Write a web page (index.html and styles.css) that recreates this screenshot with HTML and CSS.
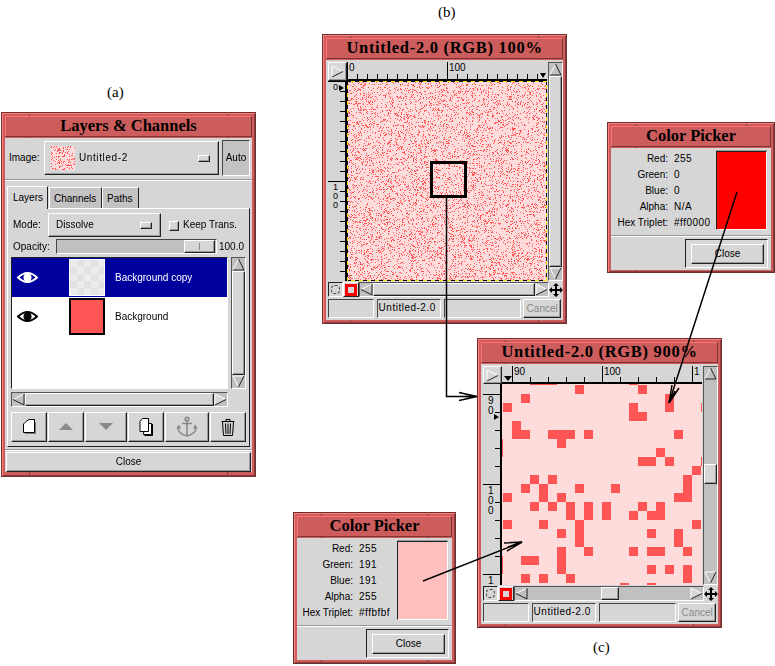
FILE: index.html
```html
<!DOCTYPE html>
<html lang="en">
<head>
  <meta charset="UTF-8">
  <meta name="viewport" content="width=device-width, initial-scale=1.0">
  <title>Color Picker figure</title>
  <link rel="stylesheet" href="styles.css">
</head>
<body>
  <svg class="defs" width="0" height="0">
    <symbol id="arr-r" viewBox="0 0 13 13"><path d="M1 12V1L12 6.5" fill="#d6d6d6" stroke="#fff"/><path d="M12 6.5L1 12" fill="none" stroke="#222"/></symbol>
    <symbol id="arr-l" viewBox="0 0 13 13"><path d="M12 1L1 6.5" fill="none" stroke="#fff"/><path d="M1 6.5L12 12V1" fill="none" stroke="#222"/></symbol>
    <symbol id="arr-u" viewBox="0 0 13 13"><path d="M1 12L6.5 1" fill="none" stroke="#fff"/><path d="M6.5 1L12 12H1" fill="none" stroke="#222"/></symbol>
    <symbol id="arr-d" viewBox="0 0 13 13"><path d="M12 1H1L6.5 12" fill="none" stroke="#fff"/><path d="M6.5 12L12 1" fill="none" stroke="#222"/></symbol>
    <symbol id="move" viewBox="0 0 14 14"><path d="M7 0l3 3H8v3h3V4l3 3-3 3V8H8v3h2l-3 3-3-3h2V8H3v2L0 7l3-3v2h3V3H4z" fill="#000"/></symbol>
    <symbol id="eye" viewBox="0 0 21 13"><path d="M1 6.5Q10.500 -2.500 20 6.500Q10.500 15.500 1 6.500Z" fill="none" stroke="currentColor" stroke-width="2"/><circle cx="10.500" cy="6.500" r="4" fill="currentColor"/></symbol>
  </svg>

  <p class="fig-label label-a">(a)</p>
  <p class="fig-label label-b">(b)</p>
  <p class="fig-label label-c">(c)</p>

  <section class="win layers">
    <h1 class="title">Layers &amp; Channels</h1>
    <div class="client">
      <div class="image-row">
        <span class="image-label">Image:</span>
        <div class="option image-option">
          <canvas id="thumb" class="thumb-noise" width="24" height="24"></canvas>
          <span>Untitled-2</span>
          <i class="indicator"></i>
        </div>
        <div class="auto">Auto</div>
      </div>
      <div class="sep"></div>
      <div class="notebook">
        <div class="tabs">
          <div class="tab active">Layers</div>
          <div class="tab tab-channels">Channels</div>
          <div class="tab tab-paths">Paths</div>
        </div>
        <div class="panel">
          <div class="mode-row">
            <span class="mode-label">Mode:</span>
            <div class="option mode-option"><span>Dissolve</span><i class="indicator"></i></div>
            <i class="check"></i>
            <span>Keep Trans.</span>
          </div>
          <div class="opacity-row">
            <span class="opacity-label">Opacity:</span>
            <div class="slider"><div class="slider-thumb"></div></div>
            <span>100.0</span>
          </div>
          <div class="list-row">
            <div class="layer-list">
              <div class="layer selected">
                <svg class="eye"><use href="#eye"/></svg>
                <div class="layer-thumb checker"></div>
                <span>Background copy</span>
              </div>
              <div class="layer">
                <svg class="eye"><use href="#eye"/></svg>
                <div class="layer-thumb solid"></div>
                <span>Background</span>
              </div>
            </div>
            <div class="scroll v">
              <svg class="arrow"><use href="#arr-u"/></svg>
              <div class="thumb fill"></div>
              <svg class="arrow"><use href="#arr-d"/></svg>
            </div>
          </div>
          <div class="scroll h list-h">
            <svg class="arrow"><use href="#arr-l"/></svg>
            <div class="thumb fill"></div>
            <svg class="arrow"><use href="#arr-r"/></svg>
          </div>
          <div class="tool-row">
            <button class="tool w36">
              <svg width="14" height="16" viewBox="0 0 14 16"><path d="M4 2.500L7 .5H12.500V13.500H1.500V5Z" fill="#fff" stroke="#000"/><path d="M13 3V14H3V15H14V3Z" fill="#777"/></svg>
            </button>
            <button class="tool w36">
              <svg width="14" height="8" viewBox="0 0 14 8"><path d="M7 0L14 7H0Z" fill="#8a8a8a"/></svg>
            </button>
            <button class="tool w42">
              <svg width="14" height="8" viewBox="0 0 14 8"><path d="M7 7L14 0H0Z" fill="#8a8a8a"/></svg>
            </button>
            <button class="tool w36">
              <svg width="15" height="18" viewBox="0 0 15 18"><path d="M5.500 5.500H12.500V16.500H4.500Z" fill="#fff" stroke="#000"/><path d="M13.500 6V17.500H5.500" fill="none" stroke="#000"/><path d="M1 3.500L3.500 .5H9.500V13.500H1Z" fill="#fff" stroke="#000"/></svg>
            </button>
            <button class="tool w44">
              <svg width="22" height="22" viewBox="0 0 22 22" fill="none" stroke="#8a8a8a" stroke-width="1.600"><circle cx="11" cy="3" r="1.800"/><path d="M11 5V20M6 7.500H16M1.500 11Q2 18 11 20Q20 18 20.500 11M1 12L3 10L4 13M21 12L19 10L18 13"/></svg>
            </button>
            <button class="tool w36">
              <svg width="14" height="18" viewBox="0 0 14 18" fill="none" stroke="#000"><path d="M.5 3.500H13.500M5 3V1.500H9V3M1.500 4L2.500 17.500H11.500L12.500 4"/><path d="M4.500 5.500L5 16M7 5.500V16M9.500 5.500L9 16"/></svg>
            </button>
          </div>
        </div>
      </div>
      <div class="sep sep-close"></div>
      <button class="btn close-wide">Close</button>
    </div>
  </section>

  <section class="win display normal">
    <h1 class="title">Untitled-2.0 (RGB) 100%</h1>
    <div class="client">
      <div class="view-grid">
        <div class="corner"><svg class="arrow"><use href="#arr-r"/></svg></div>
        <div class="ruler-h"><span>0</span><span>100</span></div>
        <div class="scroll v side">
          <svg class="arrow"><use href="#arr-u"/></svg>
          <div class="thumb fill"></div>
          <svg class="arrow"><use href="#arr-d"/></svg>
        </div>
        <div class="ruler-v"><span>0</span><span>1<br>0<br>0</span></div>
        <canvas id="noise" class="view" width="200" height="200"></canvas>
      </div>
      <div class="bar-row">
        <div class="qmask"><i></i></div>
        <div class="mask"><i></i></div>
        <div class="scroll h bar-scroll">
          <svg class="arrow"><use href="#arr-l"/></svg>
          <div class="thumb fill"></div>
          <svg class="arrow"><use href="#arr-r"/></svg>
        </div>
        <svg class="move"><use href="#move"/></svg>
      </div>
      <div class="status-row">
        <div class="status s1"></div>
        <div class="status s2">Untitled-2.0</div>
        <div class="status s3"></div>
        <button class="btn cancel">Cancel</button>
      </div>
    </div>
  </section>

  <section class="win display zoomed">
    <h1 class="title">Untitled-2.0 (RGB) 900%</h1>
    <div class="client">
      <div class="view-grid">
        <div class="corner"><svg class="arrow"><use href="#arr-r"/></svg></div>
        <div class="ruler-h"><span>90</span><span>100</span><span>1</span></div>
        <div class="scroll v side">
          <svg class="arrow"><use href="#arr-u"/></svg>
          <div class="thumb pos-v"></div>
          <svg class="arrow end"><use href="#arr-d"/></svg>
        </div>
        <div class="ruler-v"><span>9<br>0</span><span>1<br>0<br>0</span><span>1</span></div>
        <canvas id="cells" class="view" width="200" height="201"></canvas>
      </div>
      <div class="bar-row">
        <div class="qmask"><i></i></div>
        <div class="mask"><i></i></div>
        <div class="scroll h bar-scroll">
          <svg class="arrow"><use href="#arr-l"/></svg>
          <div class="thumb pos-h"></div>
          <svg class="arrow end"><use href="#arr-r"/></svg>
        </div>
        <svg class="move"><use href="#move"/></svg>
      </div>
      <div class="status-row">
        <div class="status s1"></div>
        <div class="status s2">Untitled-2.0</div>
        <div class="status s3"></div>
        <button class="btn cancel">Cancel</button>
      </div>
    </div>
  </section>

  <section class="win picker picker-red">
    <h1 class="title">Color Picker</h1>
    <div class="client">
      <div class="picker-top">
        <dl class="readout">
          <dt>Red:</dt><dd>255</dd>
          <dt>Green:</dt><dd>0</dd>
          <dt>Blue:</dt><dd>0</dd>
          <dt>Alpha:</dt><dd>N/A</dd>
          <dt>Hex Triplet:</dt><dd>#ff0000</dd>
        </dl>
        <div class="swatch"></div>
      </div>
      <div class="sep"></div>
      <div class="default-frame"><button class="btn">Close</button></div>
    </div>
  </section>

  <section class="win picker picker-pink">
    <h1 class="title">Color Picker</h1>
    <div class="client">
      <div class="picker-top">
        <dl class="readout">
          <dt>Red:</dt><dd>255</dd>
          <dt>Green:</dt><dd>191</dd>
          <dt>Blue:</dt><dd>191</dd>
          <dt>Alpha:</dt><dd>255</dd>
          <dt>Hex Triplet:</dt><dd>#ffbfbf</dd>
        </dl>
        <div class="swatch"></div>
      </div>
      <div class="sep"></div>
      <div class="default-frame"><button class="btn">Close</button></div>
    </div>
  </section>

  <svg class="callouts" width="775" height="666" viewBox="0 0 775 666" fill="none" stroke="#000" stroke-width="1.500">
    <rect x="431.500" y="162.500" width="34" height="34" stroke-width="3"/>
    <path d="M446.500 198V396.500H476"/>
    <path d="M477 396.500L459 392.500M477 396.500L459 400.500M477 396.500L465 396.500"/>
    <path d="M737 192L669 403"/>
    <path d="M669 403L672 385M669 403L679 388M669 403L675 391"/>
    <path d="M423 581L522 542"/>
    <path d="M522 542L504 543M522 542L507 551M522 542L508 547"/>
  </svg>

  <script src="script.js"></script>
</body>
</html>
```

FILE: styles.css
```css
* {
  box-sizing: border-box;
}
body {
  position: relative;
  width: 775px;
  height: 666px;
  margin: 0;
  overflow: hidden;
  background: #fff;
  color: #000;
  font: 10px/12px "Liberation Sans", sans-serif;
}
.defs {
  position: absolute;
}
.fig-label {
  position: absolute;
  margin: 0;
  font: 15px/16px "Liberation Serif", serif;
}
.label-a { left: 107px; top: 84px; }
.label-b { left: 438px; top: 4px; }
.label-c { left: 593px; top: 639px; }

.callouts {
  position: absolute;
  left: 0;
  top: 0;
  z-index: 5;
}

/* window frame */
.win {
  position: absolute;
  padding: 3px;
  border: 1px solid #6e2f2f;
  background:
    linear-gradient(#8b3d3d, #8b3d3d) 27px 0 / 1px 100% no-repeat,
    linear-gradient(#8b3d3d, #8b3d3d) calc(100% - 27px) 0 / 1px 100% no-repeat,
    #cd5c5c;
  box-shadow: inset 1px 1px #ff7f7f, inset -1px -1px #8b3d3d;
}
.title {
  height: 21px;
  margin: 0 0 1px;
  border: 1px solid;
  border-color: #ff7575 #7c3535 #7c3535 #ff7575;
  background: #cd5c5c;
  text-align: center;
  font: bold 16.500px/18px "Liberation Serif", serif;
  white-space: nowrap;
}
.display .title {
  letter-spacing: .7px;
}
.client {
  display: flow-root;
  background: #d6d6d6;
}
.layers { left: 1px; top: 112px; width: 255px; height: 365px; }
.normal { left: 322px; top: 34px; width: 245px; height: 290px; }
.zoomed { left: 477px; top: 338px; width: 245px; height: 290px; }
.picker-red { left: 607px; top: 122px; width: 168px; height: 151px; }
.picker-pink { left: 293px; top: 512px; width: 163px; height: 152px; }
.layers .client { height: 334px; }
.display .client { height: 260px; padding: 2px; }
.picker .client { height: 122px; }

/* shared widgets */
.sep {
  height: 2px;
  border-top: 1px solid #999;
  border-bottom: 1px solid #fff;
}
.btn, .tool, .option, .thumb, .indicator, .corner, .slider-thumb {
  border: 1px solid;
  border-color: #fff #222 #222 #fff;
  background: #d6d6d6;
  box-shadow: inset -1px -1px #9a9a9a;
}
.btn, .tool {
  padding: 0;
  font: inherit;
  color: inherit;
}
.option {
  display: flex;
  align-items: center;
}
.indicator {
  flex: none;
  width: 12px;
  height: 7px;
  margin-left: auto;
}
.scroll {
  display: flex;
  flex: none;
  border: 1px solid;
  border-color: #555 #fff #fff #555;
  background: #c0c0c0;
}
.scroll.v {
  flex-direction: column;
  width: 15px;
}
.scroll.h {
  height: 15px;
}
.arrow {
  flex: none;
  width: 13px;
  height: 13px;
}
.fill {
  flex: 1;
}
.end {
  margin-left: auto;
  margin-top: auto;
}

/* layers dialog */
.image-row {
  display: flex;
  align-items: center;
  height: 36px;
  margin: 2px 0 0 4px;
}
.image-label {
  width: 35px;
}
.image-option {
  width: 175px;
  height: 34px;
  padding: 0 8px 0 6px;
}
.image-option span {
  margin-left: 4px;
  letter-spacing: .6px;
}
.thumb-noise {
  display: block;
  width: 24px;
  height: 24px;
}
.auto {
  width: 28px;
  height: 36px;
  margin-left: 3px;
  border: 1px solid;
  border-color: #444 #fff #fff #444;
  background: #c3c3c3;
  text-align: center;
  line-height: 33px;
}
.image-row + .sep {
  margin-top: 3px;
}
.notebook {
  width: 243px;
  margin: 5px 0 0 2px;
}
.tabs {
  display: flex;
  align-items: flex-end;
  height: 22px;
}
.tab {
  position: relative;
  height: 21px;
  padding-left: 4px;
  border: 1px solid;
  border-color: #fff #222 transparent #fff;
  border-bottom: 0;
  background: #c3c3c3;
  line-height: 21px;
}
.tab.active {
  z-index: 1;
  width: 41px;
  height: 23px;
  margin-bottom: -1px;
  padding-left: 5px;
  margin-right: 1px;
  background: #d6d6d6;
}
.tab-channels { width: 53px; }
.tab-paths { width: 37px; }
.panel {
  height: 239px;
  padding: 4px 3px 0 3px;
  border: 1px solid;
  border-color: #fff #222 #222 #fff;
}
.mode-row, .opacity-row {
  display: flex;
  align-items: center;
  margin-left: 2px;
}
.mode-row { height: 24px; }
.mode-label { width: 35px; }
.mode-option {
  width: 113px;
  height: 24px;
  padding: 0 8px 0 7px;
}
.check {
  width: 10px;
  height: 10px;
  margin: 2px 4px 0 8px;
  border: 1px solid;
  border-color: #fff #222 #222 #fff;
  box-shadow: inset -1px -1px #9a9a9a;
}
.opacity-row {
  height: 15px;
  margin-top: 2px;
}
.opacity-label { width: 43px; }
.slider {
  display: flex;
  justify-content: flex-end;
  width: 161px;
  height: 15px;
  margin-right: 2px;
  padding-right: 1px;
  border: 1px solid;
  border-color: #444 #fff #fff #444;
  background: #c0c0c0;
}
.slider-thumb {
  width: 31px;
  background: linear-gradient(90deg, #888, #888) 50% 50% / 1px 7px no-repeat, #d6d6d6;
}
.list-row {
  display: flex;
  gap: 3px;
  height: 132px;
  margin-top: 3px;
}
.layer-list {
  width: 217px;
  border: 1px solid;
  border-color: #222 #fff #fff #222;
  background: #fff;
}
.layer {
  display: flex;
  align-items: center;
  height: 39px;
  padding-left: 5px;
}
.layer.selected {
  background: #00009f;
  color: #fff;
}
.eye {
  flex: none;
  width: 21px;
  height: 13px;
  margin-right: 31px;
}
.layer-thumb {
  flex: none;
  width: 36px;
  height: 37px;
  margin-right: 10px;
}
.checker {
  background: repeating-conic-gradient(#e2e2e2 0 25%, #ececec 0 50%) 0 0 / 14px 14px;
  border: 1px solid #fff;
}
.solid {
  border: 2px solid #000;
  background: #ff5555;
}
.list-h {
  width: 217px;
  margin-top: 3px;
}
.tool-row {
  display: flex;
  gap: 1px;
  height: 30px;
  margin-top: 5px;
}
.tool {
  display: flex;
  align-items: center;
  justify-content: center;
}
.w36 { width: 36px; }
.w42 { width: 42px; }
.w44 { width: 44px; }
.sep-close {
  margin-top: 2px;
}
.close-wide {
  display: block;
  width: 245px;
  height: 20px;
  margin: 1px 0 0 1px;
}

/* image windows */
.view-grid {
  display: grid;
  grid-template-columns: 19px 200px 16px;
  grid-template-rows: 19px 200px;
}
.zoomed .view-grid {
  grid-template-rows: 18px 201px;
}
.view-grid .side {
  grid-column: 3;
  grid-row: 1 / 3;
  margin-left: 1px;
  width: 15px;
}
.corner {
  display: flex;
  align-items: center;
  justify-content: center;
}
.view {
  display: block;
}
.ruler-h {
  position: relative;
  display: flex;
  overflow: hidden;
  border-bottom: 2px solid #000;
  background: repeating-linear-gradient(90deg, #000 0 1px, transparent 1px 10px) 0 100% / 100% 5px no-repeat;
}
.ruler-h span {
  flex: none;
  width: 100px;
  padding-left: 1px;
  border-left: 1px solid #000;
}
.ruler-h::after, .ruler-v::after {
  content: "";
  position: absolute;
  border-style: solid;
  border-color: transparent;
}
.ruler-h::after {
  left: 193px;
  bottom: 1px;
  border-width: 5px 3px 0;
  border-top-color: #000;
}
.ruler-v {
  position: relative;
  overflow: hidden;
  border-right: 2px solid #000;
  background: repeating-linear-gradient(#000 0 1px, transparent 1px 10px) 100% 0 / 5px 100% no-repeat;
}
.ruler-v span {
  display: block;
  height: 100px;
  padding: 1px 0 0 5px;
  border-top: 1px solid #000;
  font-size: 9px;
  line-height: 9px;
}
.ruler-v::after {
  right: 1px;
  top: 4px;
  border-width: 3px 0 3px 5px;
  border-left-color: #000;
}
.zoomed .ruler-h {
  padding-left: 10px;
  background: repeating-linear-gradient(90deg, #000 0 1px, transparent 1px 18px) 10px 100% / 100% 5px no-repeat;
}
.zoomed .ruler-h span {
  width: 90px;
}
.zoomed .ruler-h::after {
  left: 2px;
  border-width: 5px 4px 0;
}
.zoomed .ruler-v {
  padding-top: 10px;
  background: repeating-linear-gradient(#000 0 1px, transparent 1px 18px) 100% 10px / 5px 100% no-repeat;
}
.zoomed .ruler-v span {
  height: 90px;
  font-size: 10px;
  line-height: 10px;
}
.zoomed .ruler-v::after {
  top: 30px;
}
.pos-v {
  width: 13px;
  height: 20px;
  margin-top: 84px;
}
.pos-h {
  width: 18px;
  margin-left: 73px;
}
.bar-row {
  display: flex;
  align-items: center;
  height: 15px;
  margin-top: 1px;
}
.qmask {
  display: flex;
  align-items: center;
  justify-content: center;
  flex: none;
  width: 15px;
  height: 15px;
  border: 1px solid;
  border-color: #222 #fff #fff #222;
}
.qmask i {
  width: 9px;
  height: 9px;
  border: 1px dashed #444;
  border-radius: 4px;
}
.mask {
  display: flex;
  align-items: center;
  justify-content: center;
  flex: none;
  width: 16px;
  height: 15px;
  border: 1px solid;
  border-color: #fff #222 #222 #fff;
}
.mask i {
  width: 12px;
  height: 12px;
  border: 3px solid #f00;
}
.bar-scroll {
  width: 190px;
}
.move {
  flex: none;
  width: 14px;
  height: 14px;
}
.status-row {
  display: flex;
  gap: 3px;
  height: 19px;
  margin-top: 2px;
}
.status {
  border: 1px solid;
  border-color: #444 #fff #fff #444;
  line-height: 15px;
  padding-left: 1px;
  letter-spacing: .5px;
  white-space: nowrap;
}
.s1 { width: 46px; }
.s2 { width: 65px; }
.s3 { width: 78px; }
.cancel {
  width: 38px;
  margin-left: -1px;
  color: #8a8a8a;
}

/* color pickers */
.picker-top {
  display: flex;
  justify-content: space-between;
  padding: 3px 4px 0 0;
  height: 87px;
}
.readout {
  display: grid;
  grid-template-columns: 57px 42px;
  column-gap: 6px;
  grid-auto-rows: 16px;
  margin: 0;
  line-height: 16px;
}
.picker-pink .readout {
  grid-template-columns: 56px 38px;
}
.readout dt {
  text-align: right;
  white-space: nowrap;
}
.readout dd {
  margin: 0;
  letter-spacing: .5px;
}
.swatch {
  width: 51px;
  height: 79px;
  border: 1px solid;
  border-color: #222 #fff #fff #222;
  box-shadow: 0 -1px #999;
}
.picker-red .swatch { background: #f00; }
.picker-pink .swatch { background: #ffbfbf; }
.default-frame {
  width: 83px;
  height: 29px;
  margin: 2px 3px 0 auto;
  padding: 4px 3px 0 5px;
  border: 1px solid;
  border-color: #222 #fff #fff #222;
}
.default-frame .btn {
  display: block;
  width: 73px;
  height: 20px;
}
```

FILE: script.js
```js
// same noise every load
let seed = 1234;
function rnd() {
  seed = (seed * 16807) % 2147483647;
  return seed / 2147483647;
}

function drawNoise(canvas, density) {
  const ctx = canvas.getContext('2d');
  ctx.fillStyle = '#ffdcdc';
  ctx.fillRect(0, 0, canvas.width, canvas.height);
  ctx.fillStyle = '#ff5555';
  for (let y = 0; y < canvas.height; y++) {
    for (let x = 0; x < canvas.width; x++) {
      if (rnd() < density) ctx.fillRect(x, y, 1, 1);
    }
  }
}

function drawAnts(canvas) {
  const ctx = canvas.getContext('2d');
  const w = canvas.width, h = canvas.height;
  for (let i = 0; i < w; i += 8) {
    ctx.fillStyle = '#000';
    ctx.fillRect(i, 0, 4, 1);
    ctx.fillRect(i, h - 1, 4, 1);
    ctx.fillRect(0, i, 1, 4);
    ctx.fillRect(w - 1, i, 1, 4);
    ctx.fillStyle = '#ffe600';
    ctx.fillRect(i + 4, 0, 4, 1);
    ctx.fillRect(i + 4, h - 1, 4, 1);
    ctx.fillRect(0, i + 4, 1, 4);
    ctx.fillRect(w - 1, i + 4, 1, 4);
  }
}

// red pixels of the 900% view, row number -> columns
const rows = {
  '-1': [3, 4, 5, 14],
  0: [8, 15],
  1: [2, 18],
  2: [0, 14, 18, 22],
  3: [14, 15],
  4: [1],
  5: [1, 2, 5, 6, 7, 9, 19],
  6: [-1, 6],
  7: [-1, 17],
  8: [15, 16, 18, 22],
  9: [21],
  10: [3, 5, 20],
  11: [2, 4, 8, 12, 20],
  12: [0, 4, 6, 19, 20],
  13: [3, 5, 7, 9, 11, 15, 17],
  14: [7, 9, 11, 14, 16, 17],
  15: [0, 4, 8, 21],
  16: [6, 8, 16, 19],
  17: [8, 19],
  18: [6, 9, 14, 16, 17, 20],
  19: [-1, 2, 3, 6],
  20: [-1, 6, 16, 18, 20],
  21: [2, 4, 7, 20],
  22: [13, 16]
};

function drawCells(canvas) {
  const ctx = canvas.getContext('2d');
  ctx.fillStyle = '#ffdcdc';
  ctx.fillRect(0, 0, canvas.width, canvas.height);
  ctx.fillStyle = '#ff5555';
  Object.keys(rows).forEach(row => {
    rows[row].forEach(col => {
      ctx.fillRect(1 + col * 9, 1 + row * 9, 9, 9);
    });
  });
}

drawNoise(document.getElementById('noise'), 0.16);
drawAnts(document.getElementById('noise'));
drawNoise(document.getElementById('thumb'), 0.2);
drawCells(document.getElementById('cells'));
```
